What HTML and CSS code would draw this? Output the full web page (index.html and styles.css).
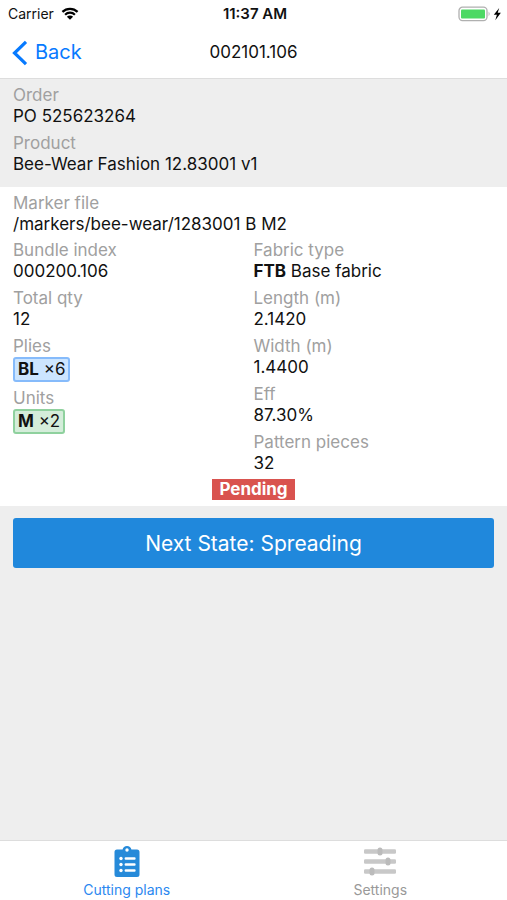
FILE: index.html
```html
<!DOCTYPE html>
<html lang="en">
<head>
    <meta charset="UTF-8">
    <meta name="viewport" content="width=device-width, initial-scale=1.0">
    <title>002101.106</title>
    <link rel="stylesheet" href="styles.css">
</head>
<body>
    <header class="header">
        <div class="status-bar">
            <div class="carrier">
                <span>Carrier</span>
                <svg width="18" height="13" viewBox="0 0 18 13" aria-hidden="true">
                    <path d="M1.4 4.9a11 11 0 0 1 15.2 0M4.1 7.7a7 7 0 0 1 9.8 0" fill="none" stroke="#000" stroke-width="2.2"/>
                    <path d="M9 12.8 5.9 9.8a4.4 4.4 0 0 1 6.2 0z"/>
                </svg>
            </div>
            <div class="time">11:37 AM</div>
            <div class="battery">
                <svg width="44" height="16" viewBox="0 0 44 16" aria-hidden="true">
                    <rect x="1" y="1.2" width="28" height="13.4" rx="3.5" fill="#fff" stroke="#b0b0b0" stroke-width="1.3"/>
                    <rect x="3" y="3.4" width="24" height="9" rx="1" fill="#4cd964"/>
                    <path d="M30.6 5.6q2 2.3 0 4.6z" fill="#b0b0b0"/>
                    <path d="M41.2 2 35.8 8.8h3.1l-1.6 5.4 5.6-7.4h-3.2z"/>
                </svg>
            </div>
        </div>
        <nav class="nav-bar">
            <a href="#" class="back">
                <svg width="16" height="26" viewBox="0 0 16 26" aria-hidden="true">
                    <path d="M14 1.8 2.5 13 14 24.2" fill="none" stroke="#077aff" stroke-width="3.2"/>
                </svg>
                <span>Back</span>
            </a>
            <h1 class="title">002101.106</h1>
        </nav>
    </header>

    <main class="content">
        <dl class="section order">
            <div class="field">
                <dt>Order</dt>
                <dd>PO 525623264</dd>
            </div>
            <div class="field">
                <dt>Product</dt>
                <dd>Bee-Wear Fashion 12.83001 v1</dd>
            </div>
        </dl>

        <div class="section details">
            <dl class="fields">
                <div class="field">
                    <dt>Marker file</dt>
                    <dd>/markers/bee-wear/1283001 B M2</dd>
                </div>
            </dl>
            <div class="columns">
                <dl class="fields">
                    <div class="field">
                        <dt>Bundle index</dt>
                        <dd>000200.106</dd>
                    </div>
                    <div class="field">
                        <dt>Total qty</dt>
                        <dd>12</dd>
                    </div>
                    <div class="field">
                        <dt>Plies</dt>
                        <dd class="tag tag-blue"><b>BL</b> ×6</dd>
                    </div>
                    <div class="field">
                        <dt>Units</dt>
                        <dd class="tag tag-green"><b>M</b> ×2</dd>
                    </div>
                </dl>
                <dl class="fields">
                    <div class="field">
                        <dt>Fabric type</dt>
                        <dd><b>FTB</b> Base fabric</dd>
                    </div>
                    <div class="field">
                        <dt>Length (m)</dt>
                        <dd>2.1420</dd>
                    </div>
                    <div class="field">
                        <dt>Width (m)</dt>
                        <dd>1.4400</dd>
                    </div>
                    <div class="field">
                        <dt>Eff</dt>
                        <dd>87.30%</dd>
                    </div>
                    <div class="field">
                        <dt>Pattern pieces</dt>
                        <dd>32</dd>
                    </div>
                </dl>
            </div>
            <span class="state">Pending</span>
        </div>

        <div class="actions">
            <button type="button" class="next-button">Next State: Spreading</button>
        </div>
    </main>

    <nav class="tab-bar">
        <a href="#" class="tab active">
            <svg width="34" height="34" viewBox="0 0 34 34" aria-hidden="true">
                <path d="M7 4.5h5.6a4.5 4.5 0 0 1 8.8 0H27A2.5 2.5 0 0 1 29.5 7v22.5A2.5 2.5 0 0 1 27 32H7a2.5 2.5 0 0 1-2.5-2.5V7A2.5 2.5 0 0 1 7 4.5z" fill="#268ad9"/>
                <g fill="#fff">
                    <circle cx="17" cy="5" r="1.7"/>
                    <circle cx="11" cy="13.5" r="1.7"/>
                    <circle cx="11" cy="19.5" r="1.7"/>
                    <circle cx="11" cy="25.5" r="1.7"/>
                    <rect x="14.6" y="12.3" width="11" height="2.4" rx="1"/>
                    <rect x="14.6" y="18.3" width="11" height="2.4" rx="1"/>
                    <rect x="14.6" y="24.3" width="11" height="2.4" rx="1"/>
                </g>
            </svg>
            <span>Cutting plans</span>
        </a>
        <a href="#" class="tab">
            <svg width="34" height="34" viewBox="0 0 34 34" fill="#c8c8c8" aria-hidden="true">
                <rect x="1" y="4.2" width="32" height="4.6" rx="1.2"/>
                <rect x="1" y="14.2" width="32" height="4.6" rx="1.2"/>
                <rect x="1" y="24.2" width="32" height="4.6" rx="1.2"/>
                <g fill="#bbb">
                    <rect x="14.5" y="2.5" width="5" height="8" rx="2.5"/>
                    <rect x="22.5" y="12.5" width="5" height="8" rx="2.5"/>
                    <rect x="6.5" y="22.5" width="5" height="8" rx="2.5"/>
                </g>
            </svg>
            <span>Settings</span>
        </a>
    </nav>
</body>
</html>
```
FILE: styles.css
```css
* {
    box-sizing: border-box;
}

body {
    margin: 0;
    min-height: 100vh;
    display: flex;
    flex-direction: column;
    background: #eee;
    color: #111;
    font-family: Inter, "Liberation Sans", sans-serif;
    font-size: 17px;
    line-height: 21px;
}

a {
    text-decoration: none;
}

.header {
    background: #fff;
    border-bottom: 1px solid #ddd;
}

.status-bar {
    display: grid;
    grid-template-columns: 1fr auto 1fr;
    align-items: center;
    height: 27px;
    padding: 0 5px 0 8px;
    font-size: 14px;
}

.carrier {
    display: flex;
    align-items: center;
    gap: 7px;
}

.time {
    font-size: 15px;
    font-weight: 600;
}

.battery {
    display: flex;
    justify-content: flex-end;
}

.nav-bar {
    display: grid;
    grid-template-columns: 1fr auto 1fr;
    align-items: center;
    height: 51px;
    padding: 0 12px;
}

.back {
    display: flex;
    align-items: center;
    gap: 7px;
    color: #077aff;
    font-size: 20px;
}

.title {
    margin: 0;
    font-size: 17px;
    font-weight: 400;
}

.content {
    flex: 1;
}

.section {
    margin: 0;
    padding: 6px 13px;
}

.order {
    padding-bottom: 12px;
}

.order,
.fields {
    display: flex;
    flex-direction: column;
    gap: 6px;
    margin-top: 0;
    margin-bottom: 0;
}

.details {
    display: flex;
    flex-direction: column;
    gap: 5px;
    background: #fff;
}

.columns {
    display: grid;
    grid-template-columns: 1fr 1fr;
}

dt {
    color: #a0a0a0;
}

dd {
    margin: 0;
}

.tag {
    width: fit-content;
    padding: 0 3px;
    border: 2px solid;
    border-radius: 3px;
}

.tag-blue {
    background: #cce5ff;
    border-color: #86bbfb;
}

.tag-green {
    background: #d4edda;
    border-color: #8fd19e;
}

.state {
    align-self: center;
    padding: 0 7px;
    background: #d9534f;
    color: #fff;
    font-weight: 700;
}

.actions {
    padding: 12px 13px;
}

.next-button {
    width: 100%;
    height: 50px;
    border: 0;
    border-radius: 3px;
    background: #2088dc;
    color: #fff;
    font-family: inherit;
    font-size: 21px;
}

.tab-bar {
    display: flex;
    height: 60px;
    background: #fff;
    border-top: 1px solid #ddd;
}

.tab {
    flex: 1;
    display: flex;
    flex-direction: column;
    align-items: center;
    padding-top: 4px;
    color: #999;
    font-size: 14px;
}

.tab.active {
    color: #2b88f0;
}
```
